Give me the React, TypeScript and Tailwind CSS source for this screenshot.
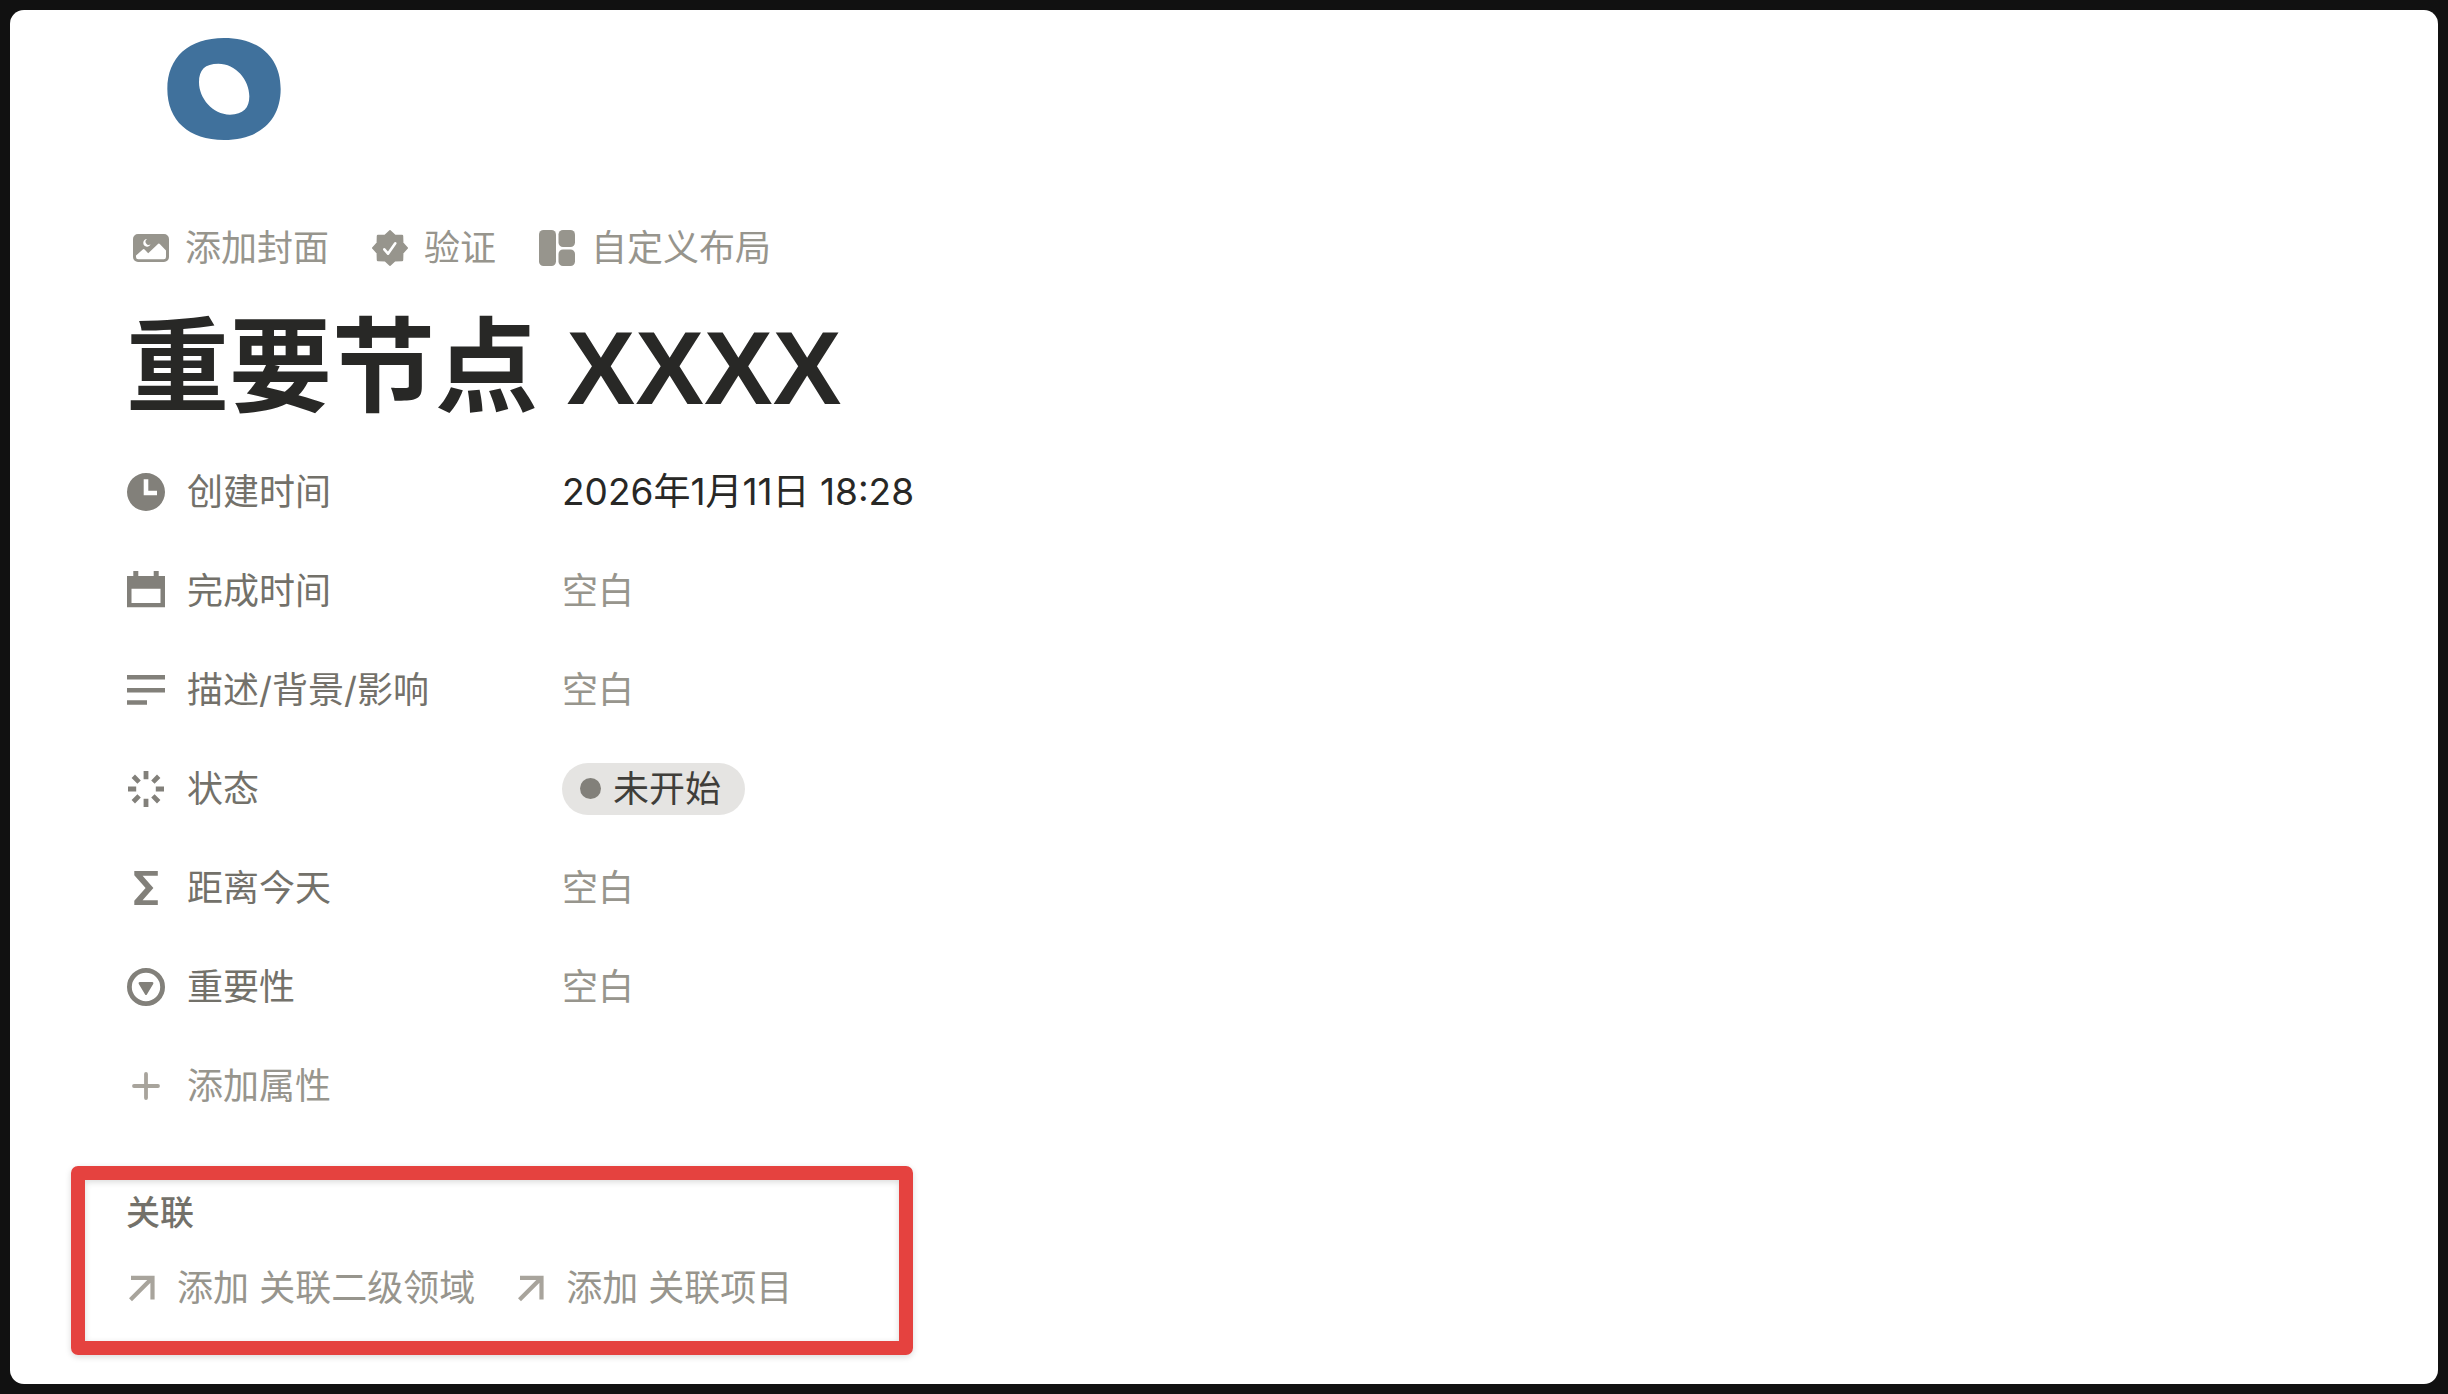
import React from "react";

interface Property {
  name: string;
  icon: React.ReactNode;
  value: React.ReactNode;
}

interface IconProps {
  className?: string;
  children: React.ReactNode;
}

function Icon({ className = "size-10", children }: IconProps) {
  return (
    <svg viewBox="0 0 40 40" fill="currentColor" className={`shrink-0 ${className}`} aria-hidden="true">
      {children}
    </svg>
  );
}

const ClockIcon = (
  <Icon>
    <path
      fillRule="evenodd"
      d="M20 1a19 19 0 1 1 0 38a19 19 0 1 1 0-38ZM17.700 7.300v16h13.300v-4.600h-8.700V7.300Z"
    />
  </Icon>
);

const CalendarIcon = (
  <Icon>
    <path
      fillRule="evenodd"
      d="M1 5h6.300V0h5v5h15.400V0h5v5H39v31.200H1ZM5.500 17.800v14.200h29V17.800Z"
    />
  </Icon>
);

const TextIcon = (
  <Icon>
    <path d="M1 5h38v4.600H1zM1 18h38v4.600H1zM1 30.200h20v4.600H1z" />
  </Icon>
);

const StatusIcon = (
  <Icon>
    <g stroke="currentColor" strokeWidth="4.800">
      <path d="M20 2v8.200M20 29.800V38M2 20h8.200M29.800 20H38M7.300 7.300l5.800 5.800M26.900 26.900l5.800 5.800M32.700 7.300l-5.800 5.800M13.100 26.900l-5.800 5.800" />
    </g>
  </Icon>
);

const FormulaIcon = (
  <Icon>
    <path d="M8.300 3h23.500v4.800H16.600L27.400 20L16.600 32.200h15.200V37H8.300v-4.300L19.600 20L8.300 7.300Z" />
  </Icon>
);

const SelectIcon = (
  <Icon>
    <circle cx="20" cy="20" r="16.600" fill="none" stroke="currentColor" strokeWidth="4.800" />
    <path d="M13.800 15h12.400c1 0 1.500 1 1 1.900l-6.300 10.600c-.4.700-1.400.7-1.800 0l-6.300-10.600c-.5-.9 0-1.900 1-1.900Z" />
  </Icon>
);

const PlusIcon = (
  <Icon className="size-10 text-[#a8a49c]">
    <path d="M20 8v24M8 20h24" fill="none" stroke="currentColor" strokeWidth="3.800" strokeLinecap="round" />
  </Icon>
);

const ArrowIcon = (
  <Icon className="size-10 text-[#a8a49c]">
    <path d="M5 9.800h21.500v21.600M26 10.300L4.500 31.800" fill="none" stroke="currentColor" strokeWidth="4.200" />
  </Icon>
);

const CoverIcon = (
  <svg viewBox="0 0 36 36" fill="currentColor" className="size-9 shrink-0" aria-hidden="true">
    <path
      fillRule="evenodd"
      d="M5 4h26a5 5 0 0 1 5 5v18a5 5 0 0 1-5 5H5a5 5 0 0 1-5-5V9a5 5 0 0 1 5-5ZM3 25.500V27a2.200 2.200 0 0 0 2.200 2.200h25.600A2.200 2.200 0 0 0 33 27v-6.500l-6-6.300a1.600 1.600 0 0 0-2.300 0l-9.500 9l-3.600-3.800a1.300 1.300 0 0 0-1.800 0ZM14 9a3.800 3.800 0 1 0 3.600 5.300A3.200 3.200 0 0 1 14 9Z"
    />
  </svg>
);

const VerifyIcon = (
  <svg viewBox="0 0 36 36" className="size-9 shrink-0" aria-hidden="true">
    <path
      fill="currentColor"
      stroke="currentColor"
      strokeWidth="2.500"
      strokeLinejoin="round"
      d="M18 1.300L22.800 5.800L30 6L30.200 13.200L34.700 18L30.200 22.800L30 30L22.800 30.200L18 34.700L13.200 30.200L6 30L5.800 22.800L1.300 18L5.800 13.200L6 6L13.200 5.800Z"
    />
    <path
      fill="none"
      stroke="#fff"
      strokeWidth="2.600"
      strokeLinecap="round"
      strokeLinejoin="round"
      d="M12.300 19.300l3.700 4.400l7.300-10.400"
    />
  </svg>
);

const LayoutIcon = (
  <svg viewBox="0 0 36 36" fill="currentColor" className="size-9 shrink-0" aria-hidden="true">
    <rect width="17" height="36" rx="4.500" />
    <rect x="19.500" width="16.500" height="17" rx="4.500" />
    <rect x="19.500" y="19.500" width="16.500" height="16.500" rx="4.500" />
  </svg>
);

const EMPTY = <span className="text-[#97958d]">空白</span>;

const ACTIONS = [
  { label: "添加封面", icon: CoverIcon },
  { label: "验证", icon: VerifyIcon },
  { label: "自定义布局", icon: LayoutIcon },
];

const PROPERTIES: Property[] = [
  { name: "创建时间", icon: ClockIcon, value: <span className="text-[37px]">2026年1月11日 18:28</span> },
  { name: "完成时间", icon: CalendarIcon, value: EMPTY },
  { name: "描述/背景/影响", icon: TextIcon, value: EMPTY },
  {
    name: "状态",
    icon: StatusIcon,
    value: (
      <span className="flex h-[52px] items-center gap-3 rounded-full bg-[#e5e4e2] pr-6 pl-[18px] text-[#3f3e3a]">
        <span className="size-[21px] rounded-full bg-[#82807a]" />
        未开始
      </span>
    ),
  },
  { name: "距离今天", icon: FormulaIcon, value: EMPTY },
  { name: "重要性", icon: SelectIcon, value: EMPTY },
];

const RELATIONS = ["添加 关联二级领域", "添加 关联项目"];

function PageIcon() {
  return (
    <svg viewBox="0 0 340 306" className="ml-[41px] h-[102px] w-[114px]" role="img" aria-label="页面图标">
      <path
        fill="#40719c"
        fillRule="evenodd"
        d="M170 0C275 0 340 58 340 153C340 248 275 306 170 306C65 306 0 248 0 153C0 58 65 0 170 0ZM153 77C113 77 95 95 95 133C95 180 135 230 188 230C228 230 246 210 246 175C246 125 205 77 153 77Z"
      />
    </svg>
  );
}

export default function App() {
  return (
    <div className="flex min-h-screen bg-[#111111] p-2.5 font-['Inter','Noto_Sans_CJK_SC',sans-serif] text-[36px] leading-[50px]">
      <main className="flex-1 rounded-[14px] bg-white pt-7 pb-7 pl-[116px]">
        <PageIcon />

        <div className="mt-[83px] flex gap-[43px] pl-[7px] text-[#97958d]">
          {ACTIONS.map((a) => (
            <button key={a.label} type="button" className="flex items-center gap-4">
              {a.icon}
              {a.label}
            </button>
          ))}
        </div>

        <h1 className="mt-[33px] font-['Liberation_Sans','Noto_Sans_CJK_SC',sans-serif] text-[103px] leading-[125px] font-bold text-[#282826]">
          重要节点 XXXX
        </h1>

        <dl className="mt-[11px]">
          {PROPERTIES.map((p) => (
            <div key={p.name} className="flex h-[99px] items-center">
              <dt className="flex w-[436px] items-center gap-[21px] text-[#73716a]">
                <span className="text-[#82807a]">{p.icon}</span>
                {p.name}
              </dt>
              <dd className="text-[#282826]">
                <button type="button" className="block">
                  {p.value}
                </button>
              </dd>
            </div>
          ))}
        </dl>

        <button type="button" className="flex h-[99px] items-center gap-[21px] text-[#97958d]">
          {PlusIcon}
          添加属性
        </button>

        <section className="mt-[31px] -ml-[55px] w-[842px] rounded-[7px] border-[14px] border-[#e5423f] pt-2 pb-7 pl-[41px] shadow-[0_2px_6px_rgba(0,0,0,0.15),inset_0_2px_6px_rgba(0,0,0,0.15)]">
          <h2 className="text-[34px] font-medium text-[#73716a]">关联</h2>
          <div className="mt-[25px] flex gap-10 text-[#97958d]">
            {RELATIONS.map((label) => (
              <button key={label} type="button" className="flex items-center gap-[11px]">
                {ArrowIcon}
                {label}
              </button>
            ))}
          </div>
        </section>
      </main>
    </div>
  );
}
